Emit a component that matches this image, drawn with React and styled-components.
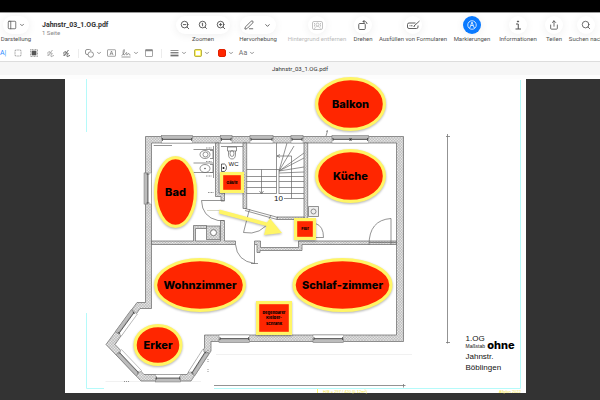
import React from "react";
import styled, { createGlobalStyle, css } from "styled-components";
import {
  ChevronDown,
  PanelLeft,
  PenLine,
  Search,
  Share,
  SquareDashed,
  ZoomIn,
  ZoomOut,
} from "lucide-react";

const YELLOW = "#fff566";
const RED = "#ff2600";

const App = () => {
  return (
    <>
      <GlobalStyle />
      <Window>
        <MenuBar />
        <Header>
          <MainBar>
            <Item $width={32}>
              <Pill>
                <PillButton $wide aria-label="Darstellung">
                  <PanelLeft size={10} strokeWidth={1.8} />
                  <ChevronDown size={6} strokeWidth={3} />
                </PillButton>
              </Pill>
              <Label>Darstellung</Label>
            </Item>
            <Title>
              <h1>Jahnstr_03_1.OG.pdf</h1>
              <p>1 Seite</p>
            </Title>
            <Item $width={52}>
              <Pill>
                <PillButton aria-label="Verkleinern">
                  <ZoomOut size={10} strokeWidth={2.2} />
                </PillButton>
                <PillButton aria-label="Originalgröße">
                  <ZoomActual />
                </PillButton>
                <PillButton aria-label="Vergrößern">
                  <ZoomIn size={10} strokeWidth={2.2} />
                </PillButton>
              </Pill>
              <Label>Zoomen</Label>
            </Item>
            <Item $width={42}>
              <Pill>
                <PillButton aria-label="Hervorhebung">
                  <PenLine size={10} strokeWidth={2} />
                </PillButton>
                <PillButton aria-label="Farbe der Hervorhebung">
                  <ChevronDown size={7} strokeWidth={3} />
                </PillButton>
              </Pill>
              <Label>Hervorhebung</Label>
            </Item>
            <Item $width={60} $muted>
              <Pill>
                <PillButton disabled aria-label="Hintergrund entfernen">
                  <BackgroundIcon />
                </PillButton>
              </Pill>
              <Label>Hintergrund entfernen</Label>
            </Item>
            <Item $width={16}>
              <Pill>
                <PillButton aria-label="Drehen">
                  <RotateIcon />
                </PillButton>
              </Pill>
              <Label>Drehen</Label>
            </Item>
            <Item $width={68}>
              <Pill>
                <PillButton aria-label="Ausfüllen von Formularen">
                  <FormIcon />
                </PillButton>
              </Pill>
              <Label>Ausfüllen von Formularen</Label>
            </Item>
            <Item $width={34}>
              <Pill>
                <PillButton $active aria-pressed="true" aria-label="Markierungen">
                  <MarkupIcon />
                </PillButton>
              </Pill>
              <Label>Markierungen</Label>
            </Item>
            <Item $width={42}>
              <Pill>
                <PillButton aria-label="Informationen">
                  <InfoIcon />
                </PillButton>
              </Pill>
              <Label>Informationen</Label>
            </Item>
            <Item $width={14}>
              <Pill>
                <PillButton aria-label="Teilen">
                  <Share size={10} strokeWidth={2} />
                </PillButton>
              </Pill>
              <Label>Teilen</Label>
            </Item>
            <Item $width={34}>
              <Pill>
                <PillButton aria-label="Suchen">
                  <Search size={10} strokeWidth={2} />
                </PillButton>
              </Pill>
              <Label>Suchen nach</Label>
            </Item>
          </MainBar>

          <MarkupBar>
            <Tool $width={10} $blue aria-label="Textauswahl">
              A|
            </Tool>
            <Tool aria-label="Rechteckige Auswahl">
              <SquareDashed size={8} strokeWidth={2} />
            </Tool>
            <Tool aria-label="Schwärzen">
              <RedactIcon />
            </Tool>
            <Tool aria-label="Skizzieren">
              <SketchIcon />
            </Tool>
            <Tool aria-label="Zeichnen">
              <SketchIcon bold />
            </Tool>
            <Divider />
            <Tool $width={20} aria-label="Formen">
              <ShapesIcon />
              <ChevronDown size={6} strokeWidth={3} />
            </Tool>
            <Tool aria-label="Text">
              <TextBoxIcon />
            </Tool>
            <Tool $width={22} aria-label="Unterschreiben">
              <SignIcon />
              <ChevronDown size={6} strokeWidth={3} />
            </Tool>
            <Tool aria-label="Notiz">
              <NoteIcon />
            </Tool>
            <Divider />
            <Tool $width={24} aria-label="Formstil">
              <LinesIcon />
              <ChevronDown size={6} strokeWidth={3} />
            </Tool>
            <Tool $width={24} aria-label="Rahmenfarbe">
              <Swatch $outline />
              <ChevronDown size={6} strokeWidth={3} />
            </Tool>
            <Tool $width={24} aria-label="Füllfarbe">
              <Swatch />
              <ChevronDown size={6} strokeWidth={3} />
            </Tool>
            <Tool $width={18} aria-label="Textstil">
              Aa
              <ChevronDown size={6} strokeWidth={3} />
            </Tool>
          </MarkupBar>
        </Header>
        <TabBar>Jahnstr_03_1.OG.pdf</TabBar>
        <Canvas>
          <FloorPlan />
        </Canvas>
      </Window>
    </>
  );
};

/* toolbar icons */

const ZoomActual = () => (
  <svg width="10" height="10" viewBox="0 0 24 24" fill="none" stroke="currentColor" strokeWidth="2.2">
    <circle cx="11" cy="11" r="8" />
    <path d="M21 21l-4.3-4.3M9 9l2-1.5V15" />
  </svg>
);

const BackgroundIcon = () => (
  <svg width="11" height="9" viewBox="0 0 22 18" fill="none" stroke="currentColor" strokeWidth="1.8">
    <rect x="1" y="1" width="20" height="16" rx="3" />
    <circle cx="11" cy="7" r="3" />
    <path d="M5 16c1-4 3-5 6-5s5 1 6 5M5 4v8M17 4v8" strokeDasharray="3 1" />
  </svg>
);

const RotateIcon = () => (
  <svg width="10" height="11" viewBox="0 0 20 22" fill="none" stroke="currentColor" strokeWidth="1.8">
    <rect x="1.5" y="7" width="13" height="12" rx="2" />
    <path d="M10 3h3c3 0 5 2 5 5M13 0l-3 3 3 3" />
  </svg>
);

const FormIcon = () => (
  <svg width="13" height="10" viewBox="0 0 26 20" fill="none" stroke="currentColor" strokeWidth="1.8">
    <path d="M17 6H4a3 3 0 0 0-3 3v5a3 3 0 0 0 3 3h15a3 3 0 0 0 3-3v-3M14 12L25 2M13 13l3-1" />
    <path d="M5 11.5h7" strokeDasharray="2 1" />
  </svg>
);

const MarkupIcon = () => (
  <svg width="10" height="10" viewBox="0 0 20 20" fill="none" stroke="currentColor" strokeWidth="1.6">
    <circle cx="10" cy="10" r="8.5" />
    <path d="M5.5 16l3-8L10 4l1.5 4 3 8M8 11h4" />
  </svg>
);

const InfoIcon = () => (
  <svg width="10" height="10" viewBox="0 0 20 20" fill="none" stroke="currentColor" strokeWidth="2">
    <path d="M6 8h4.5v10M5 18h11" />
    <circle cx="10" cy="3" r="1.2" fill="currentColor" />
  </svg>
);

const RedactIcon = () => (
  <svg width="8" height="8" viewBox="0 0 16 16" fill="none" stroke="#888" strokeWidth="1.5">
    <rect x="1" y="1" width="14" height="14" strokeDasharray="2 1" />
    <rect x="4" y="4" width="8" height="8" fill="#555" stroke="#555" />
  </svg>
);

const SketchIcon = ({ bold }) => (
  <svg
    width="9"
    height="9"
    viewBox="0 0 18 18"
    fill="none"
    stroke={bold ? "#666" : "#8a8a8a"}
    strokeWidth={bold ? 2 : 1.4}
  >
    <path d="M2 9c3-3 5-5 6-3S1 13 4 13s6-6 8-5-4 6-2 7 3-2 6-2" />
    <path d="M8 8l5-6" />
  </svg>
);

const ShapesIcon = () => (
  <svg width="9" height="9" viewBox="0 0 18 18" fill="none" stroke="currentColor" strokeWidth="1.5">
    <path d="M6 11H4a3 3 0 0 1-3-3V4a3 3 0 0 1 3-3h5a3 3 0 0 1 3 3" />
    <circle cx="11.5" cy="11" r="5.5" />
  </svg>
);

const TextBoxIcon = () => (
  <svg width="9" height="8" viewBox="0 0 18 16" fill="none" stroke="currentColor" strokeWidth="1.3">
    <rect x="1" y="1.5" width="16" height="13" rx="1" />
    <path d="M6 12l3-8 3 8M7 9.5h4" />
  </svg>
);

const SignIcon = () => (
  <svg width="10" height="9" viewBox="0 0 20 18" fill="none" stroke="currentColor" strokeWidth="1.4">
    <path d="M1 13c5-1 7-12 5-12S3 12 6 12s3-5 5-5-1 6 1 5 2-4 4-3-1 4 3 3M1 16h18" />
  </svg>
);

const NoteIcon = () => (
  <svg width="8" height="8" viewBox="0 0 16 16" fill="none" stroke="#888" strokeWidth="1.5">
    <rect x="1" y="1" width="14" height="14" rx="1" />
    <path d="M1 3h14" strokeWidth="3" />
  </svg>
);

const LinesIcon = () => (
  <svg width="9" height="8" viewBox="0 0 18 16" stroke="currentColor">
    <path d="M1 3h16" strokeWidth="1.5" />
    <path d="M1 7.500h16" strokeWidth="2.5" />
    <path d="M1 13h16" strokeWidth="3.5" />
  </svg>
);

/* plan parts */

// Window opening, drawn along the middle of a wall
const Opening = ({ x1, y1, x2, y2, flip }) => {
  const length = Math.hypot(x2 - x1, y2 - y1);
  const angle = (Math.atan2(y2 - y1, x2 - x1) * 180) / Math.PI;
  return (
    <g transform={`translate(${x1} ${y1}) rotate(${angle})`} strokeWidth="0.5">
      <rect y="-3.5" width={length} height="7" fill="#fff" stroke="#888" />
      <rect y={flip ? 0.5 : -4} width={length} height="3.5" fill="#bcbcbc" stroke="#777" />
      <path d={`M1 0H${length - 1}M1-1.5v3M${length - 1}-1.5v3`} stroke="#333" strokeWidth="0.7" />
    </g>
  );
};

const Room = ({ cx, cy, rx, ry, name }) => (
  <g>
    <Marker>
      <ellipse cx={cx} cy={cy} rx={rx - 1.6} ry={ry - 1.6} />
    </Marker>
    <RoomName x={cx} y={cy + 4}>
      {name}
    </RoomName>
  </g>
);

const Spot = ({ x, y, width, height, lines }) => (
  <g>
    <Marker>
      <rect x={x + 1.6} y={y + 1.6} width={width - 3.2} height={height - 3.2} />
    </Marker>
    {lines.map((line, i) => (
      <SpotName key={line} x={x + width / 2} y={y + height / 2 + 1 + (i - (lines.length - 1) / 2) * 5.5}>
        {line}
      </SpotName>
    ))}
  </g>
);

const FloorPlan = () => (
  <Sheet viewBox="65 79 461 314" role="img" aria-label="Grundriss 1.OG">
    <defs>
      <pattern id="hatch" width="2" height="2" patternUnits="userSpaceOnUse" patternTransform="rotate(45)">
        <rect width="2" height="2" fill="#f1f1f1" />
        <path d="M0 0V2M0 0H2" stroke="#888" strokeWidth="0.7" />
      </pattern>
    </defs>

    <g stroke="#b5fafa" strokeWidth="1" fill="none">
      <path d="M86.5 79v53M86.5 313v75.5H104M214 388.5H520.5V80" />
    </g>
    <path d="M105.5 381.5H201M216 354.5H412" stroke="#eee" strokeWidth="0.8" />

    {/* walls */}
    <g fill="url(#hatch)" stroke="#666" strokeWidth="0.7">
      <path
        fillRule="evenodd"
        d="M145.5 136.5H403.5V341.5H211V351L191 381H141L106 344.5L137 302.5H145.5Z
           M151.5 143V308.5H140L115 344.5L144 374.5H187L204.5 348V335H396.5V143Z"
      />
      <path d="M215.5 143H219V193H224.5V201H221V196.5H215.5Z" />
      <path d="M243 143H246.7V208.5H243ZM304 143H307.7V219H304Z" />
      <path d="M151.5 241H193.5V225.5H206.5V228.5H195.5V241H220.5V220.5H224.5V241H235.5V244.5H151.5Z" />
      <path d="M254.5 241H260.5V247.5H298.5V241H396.5V244.5H302V250.5H260V252.5H257V244.5H254.5Z" />
      <path d="M277 217H304V219.5H277Z" />
      <rect x="206.5" y="226" width="13.5" height="13.5" />
    </g>
    <circle cx="213.5" cy="232.7" r="3" fill="#fff" stroke="#555" strokeWidth="0.7" />

    <Opening x1={161.5} y1={139.5} x2={192.5} y2={139.5} />
    <Opening x1={220.5} y1={139.5} x2={232} y2={139.5} />
    <Opening x1={250} y1={139.5} x2={273} y2={139.5} />
    <Opening x1={291} y1={139.5} x2={303} y2={139.5} />
    <Opening x1={332} y1={139.5} x2={368.5} y2={139.5} />
    <path d="M349.5 138l2 3m0-3l-2 3" stroke="#222" strokeWidth="0.7" />
    <Opening x1={148} y1={204} x2={148} y2={173} />
    <Opening x1={219} y1={338.5} x2={249.5} y2={338.5} flip />
    <Opening x1={313} y1={338.5} x2={343.5} y2={338.5} flip />
    <Opening x1={155.5} y1={378} x2={180.5} y2={378} flip />
    <Opening x1={118.5} y1={334} x2={134.5} y2={312} />
    <Opening x1={119} y1={352} x2={139} y2={373} flip />
    <Opening x1={191.5} y1={373.5} x2={205.5} y2={351.5} flip />

    {/* stairs */}
    <g stroke="#666" strokeWidth="0.7" fill="none">
      <path d="M246.5 169.5H279M246.5 176.5H276.5M246.5 181.5H276.5M246.5 187.5H276.5M246.5 193.5H276.5M276.5 143V193.5M279 171V194" />
      <path d="M279 176.5H304M279 181.5H304M279 187.5H304M279 193.5H304" />
      <path d="M279 171L287 143M279 171L294 146M279 171L304 153M279 171L304 158M279 171L304 167M279 173L304 172" />
      <path d="M291.5 198.5V156H277M280 154.5l-3 1.5 3 1.5M261.5 169.5V193M259.5 191l2 3 2-3M284 198.5H304" />
      <path d="M245 208.5L278 217.5M245 210.5L277 219.5M249 211L243.5 232.5Q261 236 271 219M249 211l1-2M269 219l2-4" />
    </g>

    {/* doors */}
    <g stroke="#666" strokeWidth="0.7" fill="none">
      <path d="M224 200.5H201.5Q202 217 218 220.5H224" />
      <path d="M207 210.5H220" stroke="#c4c4b0" />
      <path d="M235.5 244.5Q237 261 254.5 263.5V244.5M251 263.5H258" />
      <path d="M369 245Q369 220 391 218.5V244.5M369 242.5H396" />
      <path d="M315.5 223.5Q323.5 226 323.5 237.5H315" />
      <path d="M326 136l1.5-5M326 131.500l2-1" />
    </g>

    {/* sanitary fittings */}
    <g stroke="#666" strokeWidth="0.7" fill="none">
      <path d="M154 146V145.5H172M193.5 149.5H213M193.5 163H213M193.5 172.5H213M213.5 146V178M221 146.5H243" />
      <ellipse cx="205" cy="154.5" rx="5" ry="4" />
      <circle cx="205.5" cy="154.5" r="2.5" />
      <ellipse cx="205" cy="168.5" rx="5" ry="4" />
      <path d="M210 150.5h3v8h-3M210 164.5h3v8h-3" />
      <path d="M227.5 147h9v4h-9ZM228.5 151v3q0 5 3.5 5t3.5-5v-3" />
      <ellipse cx="232" cy="153.5" rx="2" ry="3" />
      <path d="M221.5 164h3q2 1 2 3.5t-2 4h-3Z" stroke="#222" />
      <path d="M308.5 206.5h10v10h-10Z" fill="#eee" />
      <circle cx="313.5" cy="211.5" r="2.5" />
      <path d="M206 148h6M206 161.5h6M206 176h6M208 192.5h6" strokeDasharray="1 0.5" />
      <path d="M208 350v3M208 359v3M208 369v4M124 381.500h5" strokeDasharray="1 1" />
    </g>
    <circle cx="223.5" cy="168" r="1" fill="#111" />
    <circle cx="205" cy="168.5" r="0.7" fill="#333" />

    {/* dimension lines */}
    <g stroke="#777" strokeWidth="0.8" fill="none">
      <path d="M447.5 134V343.5M446 136.5h4M446 342.5h4" />
      <path d="M214 385.5H405.5M403.5 384v3.5" />
    </g>

    <PlanText x="228.5" y="166" $size={6}>WC</PlanText>
    <PlanText x="274" y="201" $size={8}>10</PlanText>

    <Arrow d="M219.5 209.500L267 222.500L270 218.500L282 233L264 235L266.500 226L219 213.500Z" />

    <Room cx={350.5} cy={104} rx={35.5} ry={27} name="Balkon" />
    <Room cx={350.5} cy={176} rx={35.5} ry={27} name="Küche" />
    <Room cx={175.5} cy={192} rx={21.5} ry={36} name="Bad" />
    <Room cx={200} cy={285} rx={46} ry={27} name="Wohnzimmer" />
    <Room cx={342.5} cy={285} rx={50} ry={27} name="Schlaf-zimmer" />
    <Room cx={158} cy={345} rx={24.5} ry={21} name="Erker" />
    <Spot x={220} y={172} width={24} height={21} lines={["Gäste"]} />
    <Spot x={294} y={218} width={22} height={22} lines={["Flur"]} />
    <Spot x={256} y={301} width={36} height={34} lines={["begehbarer", "Kleider-", "schrank"]} />

    {/* title block */}
    <PlanText x="465.5" y="340.5" $size={8}>1.OG</PlanText>
    <PlanText x="465.5" y="348" $size={5}>Maßstab</PlanText>
    <RoomName x="501" y="349">ohne</RoomName>
    <PlanText x="465.5" y="359" $size={8}>Jahnstr.</PlanText>
    <PlanText x="465.5" y="370" $size={8}>Böblingen</PlanText>
    <path d="M317.5 389v4" stroke={YELLOW} />
    <PlanText x="323" y="393" $size={4} $yellow>H/B = 297 / 420 (0.12m²)</PlanText>
    <PlanText x="499" y="393" $size={4} $yellow>Allplan 2022</PlanText>
  </Sheet>
);

const GlobalStyle = createGlobalStyle`
  * {
    box-sizing: border-box;
    margin: 0;
    padding: 0;
  }
  body {
    background: #333;
    font-family: Roboto, "Liberation Sans", sans-serif;
    color: #444;
  }
`;

const Window = styled.div`
  display: flex;
  flex-direction: column;
  min-height: 100vh;
  overflow: hidden;
`;

const MenuBar = styled.div`
  height: 12px;
  background: #000;
`;

const Header = styled.header`
  background: #fff;
  border-top: 1px solid #999;
  border-bottom: 1px solid #ddd;
`;

const MainBar = styled.div`
  display: flex;
  gap: 8px;
  height: 32px;
  padding-top: 3px;
`;

const Item = styled.div`
  display: flex;
  flex-direction: column;
  align-items: center;
  flex: none;
  width: ${(p) => p.$width}px;
  color: ${(p) => (p.$muted ? "#bbb" : "#505050")};
`;

const Pill = styled.div`
  display: flex;
  height: 18px;
  border-radius: 9px;
  background: #fff;
  box-shadow: 0 1px 10px rgba(0, 0, 0, 0.07);
`;

const PillButton = styled.button`
  display: flex;
  align-items: center;
  justify-content: center;
  gap: 2px;
  width: ${(p) => (p.$wide ? 26 : 18)}px;
  border: 0;
  border-radius: 9px;
  background: none;
  color: inherit;
  ${(p) =>
    p.$active &&
    css`
      background: #0a7aff;
      color: #fff;
    `}
`;

const Label = styled.span`
  margin-top: 1px;
  font-size: 6px;
  line-height: 8px;
  white-space: nowrap;
`;

const Title = styled.div`
  flex: 1 0 129px;
  padding: 5px 0 0 2px;
  h1 {
    font-size: 7px;
    line-height: 8px;
    font-weight: 700;
    color: #333;
  }
  p {
    font-size: 6px;
    line-height: 7px;
    color: #888;
  }
`;

const MarkupBar = styled.div`
  display: flex;
  align-items: center;
  height: 16px;
`;

const Tool = styled.button`
  display: flex;
  align-items: center;
  justify-content: ${(p) => (p.$blue ? "flex-start" : "center")};
  gap: 2px;
  width: ${(p) => p.$width || 16}px;
  height: 12px;
  border: 0;
  background: none;
  font-family: inherit;
  font-size: 7px;
  color: ${(p) => (p.$blue ? "#2b8cff" : "#707070")};
`;

const Divider = styled.span`
  width: 1px;
  height: 9px;
  margin: 0 4px;
  background: #ececec;
`;

const Swatch = styled.span`
  width: 8px;
  height: 8px;
  border-radius: 2px;
  background: ${(p) => (p.$outline ? "#fff" : RED)};
  border: ${(p) => (p.$outline ? `2px solid ${YELLOW}` : "1px solid #e02000")};
  outline: ${(p) => (p.$outline ? "1px solid #b8b04a" : "none")};
  outline-offset: -1px;
`;

const TabBar = styled.div`
  height: 17px;
  background: #f6f6f6;
  border-bottom: 4px solid #fdfdfd;
  font-size: 6px;
  line-height: 14px;
  text-align: center;
  color: #333;
`;

const Canvas = styled.main`
  flex: 1;
  padding: 0 74px 7px 65px;
  background: #333;
`;

const Sheet = styled.svg`
  display: block;
  width: 100%;
  height: auto;
  overflow: visible;
  background: #fff;
`;

const Marker = styled.g`
  fill: ${RED};
  stroke: ${YELLOW};
  stroke-width: 3.2px;
  filter: drop-shadow(0 1px 1px rgba(0, 0, 0, 0.3));
`;

const Arrow = styled.path`
  fill: ${YELLOW};
  filter: drop-shadow(0 1px 1px rgba(0, 0, 0, 0.3));
`;

const RoomName = styled.text`
  font-family: Inter, sans-serif;
  font-size: 11px;
  font-weight: 800;
  text-anchor: middle;
  fill: #000;
`;

const SpotName = styled(RoomName)`
  font-size: 4px;
`;

const PlanText = styled.text`
  font-family: "Liberation Sans", sans-serif;
  font-size: ${(p) => p.$size}px;
  fill: ${(p) => (p.$yellow ? "#f5e63c" : "#111")};
`;

export default App;
